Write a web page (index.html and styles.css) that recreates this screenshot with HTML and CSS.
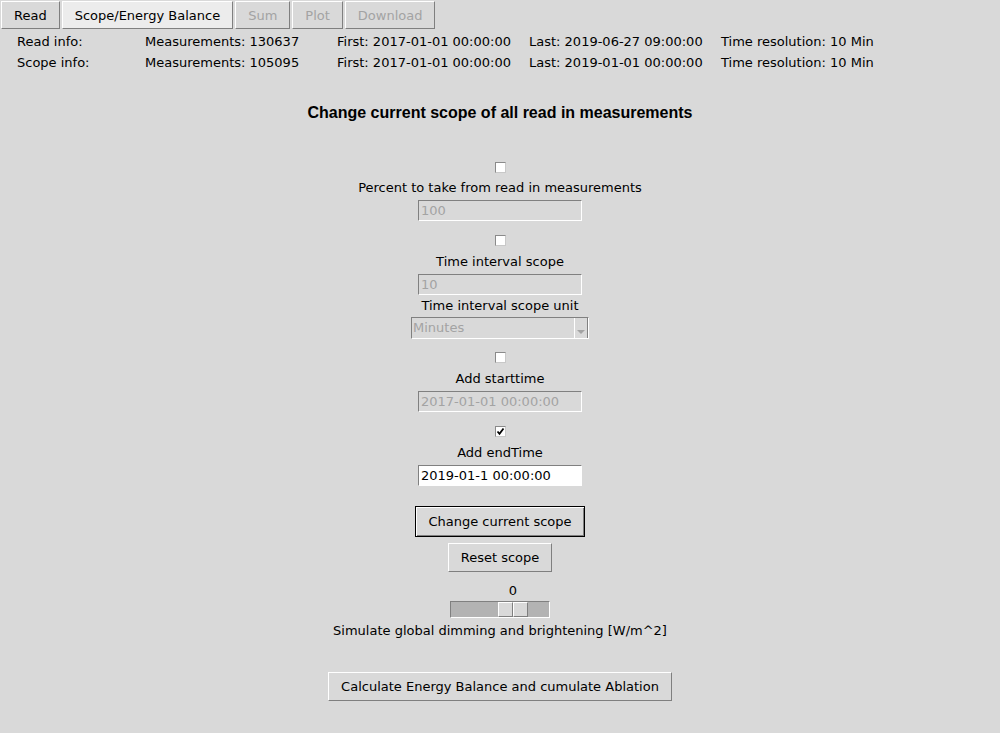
FILE: index.html
```html
<!DOCTYPE html>
<html lang="en">
<head>
<meta charset="utf-8">
<title>Scope</title>
<link rel="stylesheet" href="styles.css">
</head>
<body>
<div class="tabbar">
  <div class="btn tab">Read</div>
  <div class="btn tab active">Scope/Energy Balance</div>
  <div class="btn tab disabled">Sum</div>
  <div class="btn tab disabled">Plot</div>
  <div class="btn tab disabled">Download</div>
</div>

<div class="info">
  <div>Read info:</div>
  <div>Measurements: 130637</div>
  <div>First: 2017-01-01 00:00:00</div>
  <div>Last: 2019-06-27 09:00:00</div>
  <div>Time resolution: 10 Min</div>
  <div>Scope info:</div>
  <div>Measurements: 105095</div>
  <div>First: 2017-01-01 00:00:00</div>
  <div>Last: 2019-01-01 00:00:00</div>
  <div>Time resolution: 10 Min</div>
</div>

<h1 class="heading">Change current scope of all read in measurements</h1>

<div class="form">
  <div class="check-row first"><span class="check"></span></div>
  <div class="field-label">Percent to take from read in measurements</div>
  <div class="entry disabled">100</div>

  <div class="check-row"><span class="check"></span></div>
  <div class="field-label">Time interval scope</div>
  <div class="entry disabled">10</div>
  <div class="field-label">Time interval scope unit</div>
  <div class="combo">
    <span class="combo-text">Minutes</span>
    <span class="combo-arrow">
      <svg width="8" height="6" viewBox="0 0 8 6"><polygon points="0,1 8,1 4,5" fill="#a3a3a3"/></svg>
    </span>
  </div>

  <div class="check-row"><span class="check"></span></div>
  <div class="field-label">Add starttime</div>
  <div class="entry disabled">2017-01-01 00:00:00</div>

  <div class="check-row"><span class="check">
    <svg width="9" height="9" viewBox="0 0 9 9"><path d="M1.5 4.5 L3.5 6.8 L7.5 1.5" fill="none" stroke="#000" stroke-width="1.8"/></svg>
  </span></div>
  <div class="field-label">Add endTime</div>
  <div class="entry">2019-01-1 00:00:00</div>

  <div class="btn default-btn">Change current scope</div>
  <div class="btn reset-btn">Reset scope</div>

  <div class="scale-value"><span>0</span></div>
  <div class="scale">
    <span class="thumb"></span><span class="thumb"></span>
  </div>
  <div class="field-label scale-label">Simulate global dimming and brightening [W/m^2]</div>

  <div class="btn calc-btn">Calculate Energy Balance and cumulate Ablation</div>
</div>
</body>
</html>
```

FILE: styles.css
```css
html, body {
  margin: 0;
  padding: 0;
}
body {
  width: 1000px;
  height: 733px;
  overflow: hidden;
  background: #d9d9d9;
  font-family: "DejaVu Sans", sans-serif;
  font-size: 13px;
  color: #000;
}

.btn {
  box-sizing: border-box;
  display: flex;
  align-items: center;
  justify-content: center;
  padding: 0 12px;
  background: #d9d9d9;
  border: 1px solid;
  border-color: #ffffff #7f7f7f #7f7f7f #ffffff;
  white-space: nowrap;
}

.tabbar {
  display: flex;
  gap: 2px;
  padding: 1px 0 0 1px;
}
.tab {
  height: 28px;
}
.tab.active {
  background: #ececec;
}
.tab.disabled {
  color: #a3a3a3;
}

.info {
  display: grid;
  grid-template-columns: 128px 192px 192px 192px auto;
  padding: 2px 0 0 17px;
  line-height: 21px;
}

.heading {
  margin: 30px 0 0;
  text-align: center;
  font-family: "Liberation Sans", Arial, sans-serif;
  font-weight: bold;
  font-size: 16px;
  line-height: 20px;
}

.form {
  display: flex;
  flex-direction: column;
  align-items: center;
}

.check-row {
  height: 20px;
  margin-top: 9px;
  display: flex;
  align-items: center;
  justify-content: center;
}
.check-row.first {
  margin-top: 34px;
}
.combo + .check-row {
  margin-top: 8px;
}
.check-row:not(.first) + .field-label {
  margin-top: 1px;
}
.check {
  box-sizing: border-box;
  width: 11px;
  height: 11px;
  background: #fff;
  border: 1px solid;
  border-color: #8a8a8a #c8c8c8 #c8c8c8 #8a8a8a;
  display: flex;
  align-items: center;
  justify-content: center;
}

.field-label {
  line-height: 21px;
  white-space: nowrap;
}

.entry {
  box-sizing: border-box;
  width: 164px;
  height: 21px;
  margin-top: 2px;
  padding-left: 2px;
  line-height: 19px;
  background: #fff;
  border: 1px solid;
  border-color: #808080 #ffffff #ffffff #808080;
  white-space: nowrap;
}
.entry.disabled {
  background: #d9d9d9;
  color: #a3a3a3;
}

.combo {
  box-sizing: border-box;
  width: 178px;
  height: 22px;
  margin-top: 1px;
  display: flex;
  border: 1px solid;
  border-color: #808080 #ffffff #ffffff #808080;
  color: #a3a3a3;
}
.combo-text {
  flex: 1;
  padding-left: 1px;
  line-height: 19px;
}
.combo-arrow {
  box-sizing: border-box;
  width: 14px;
  border-left: 1px solid #ffffff;
  border-right: 1px solid #808080;
  display: flex;
  align-items: flex-end;
  justify-content: center;
  padding-bottom: 3px;
}

.default-btn {
  height: 31px;
  margin-top: 20px;
  border: 1px solid #000;
  box-shadow: inset 1px 1px 0 #ffffff, inset -1px -1px 0 #7f7f7f;
  padding: 0 12px;
}
.reset-btn {
  height: 29px;
  margin-top: 6px;
}

.scale-value {
  width: 100px;
  margin-top: 9px;
  padding-left: 48px;
  box-sizing: border-box;
  line-height: 20px;
}
.scale-value span {
  display: block;
  width: 30px;
  text-align: center;
}

.scale {
  box-sizing: border-box;
  width: 100px;
  height: 17px;
  margin-top: 0;
  padding-left: 47px;
  display: flex;
  background: #b3b3b3;
  border: 1px solid;
  border-color: #808080 #ffffff #ffffff #808080;
}
.thumb {
  box-sizing: border-box;
  width: 15px;
  height: 15px;
  background: #d9d9d9;
  border: 1px solid;
  border-color: #ffffff #7f7f7f #7f7f7f #ffffff;
}

.scale-label {
  margin-top: 2px;
}

.calc-btn {
  height: 29px;
  margin-top: 31px;
}
```
